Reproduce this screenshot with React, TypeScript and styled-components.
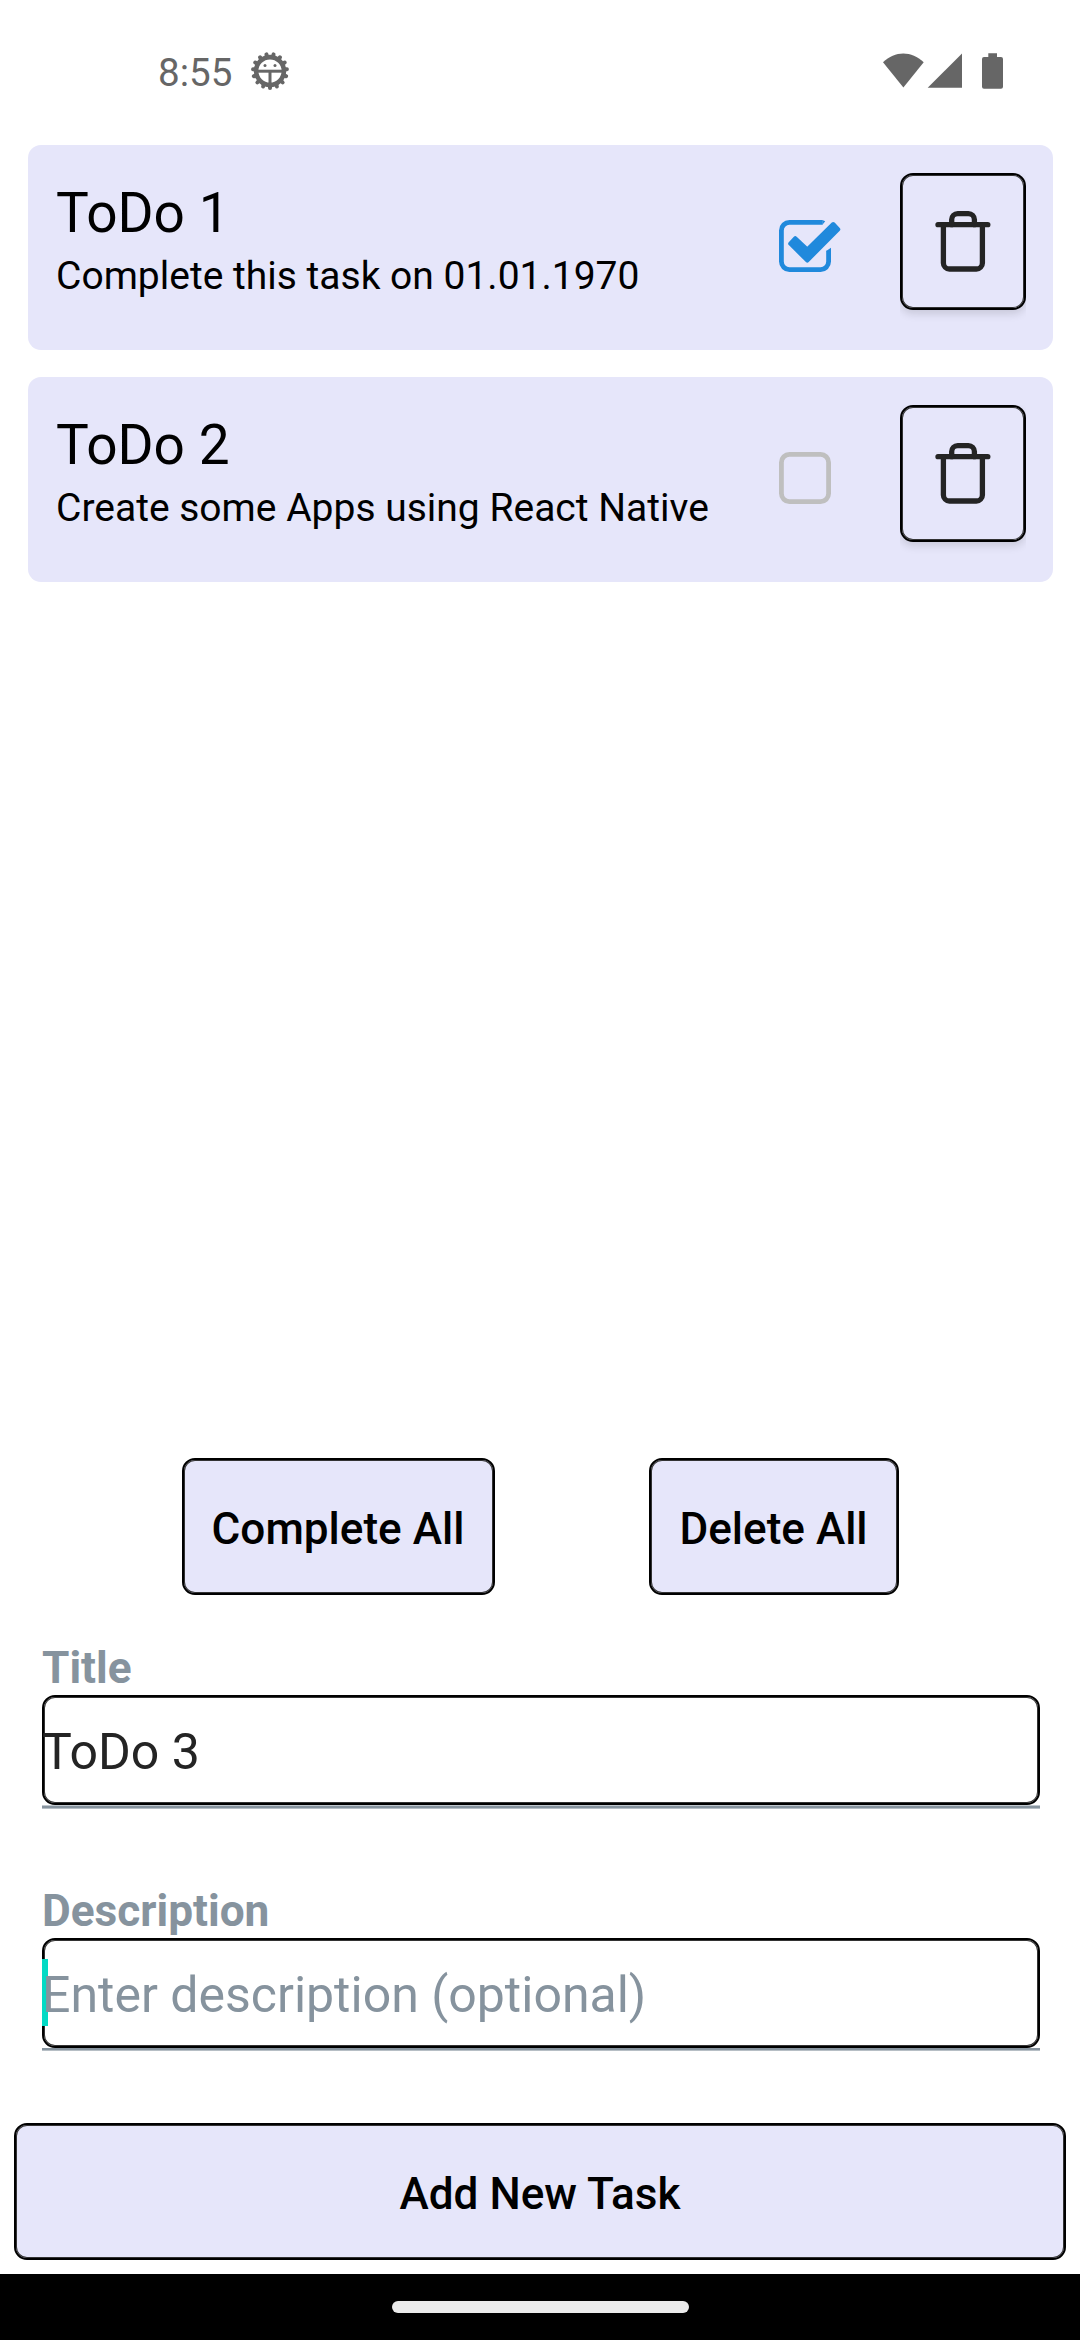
import React, { useState } from "react";
import styled, { createGlobalStyle, css } from "styled-components";

const colors = {
  lavender: "#e6e6fa",
  primary: "#2089dc",
  grey: "#86939e",
  unchecked: "#bfbfbf",
  text: "#242424",
  status: "#666666",
  cursor: "#03dac5",
};

const GlobalStyle = createGlobalStyle`
  * { box-sizing: border-box; }
  body { margin: 0; background: #fff; }
`;

const outlined = css`
  border: 2px solid #000;
  border-radius: 13px;
  box-shadow: inset 0 0 0 1px #333;
`;

const Screen = styled.div`
  display: flex;
  flex-direction: column;
  width: 1080px;
  height: 2340px;
  overflow: hidden;
  background: #fff;
  font-family: Roboto, "Liberation Sans", sans-serif;
  color: #000;
`;

const StatusBar = styled.header`
  display: flex;
  align-items: flex-start;
  height: 145px;
  padding: 50px 76px 0 158px;
  color: ${colors.status};
`;

const Clock = styled.span`
  width: 92px;
  font-size: 38.6px;
  line-height: 46px;
`;

const DebugBadge = styled.span`
  display: flex;
  padding-top: 1px;
`;

const StatusIcons = styled.div`
  display: flex;
  margin-left: auto;
  padding-top: 2px;
`;

const TaskList = styled.main`
  display: flex;
  flex: 1;
  flex-direction: column;
  gap: 27px;
  padding: 0 27px 0 28px;
`;

const Card = styled.article`
  display: flex;
  align-items: flex-start;
  height: 205px;
  padding: 28px 27px 0 28px;
  border-radius: 13px;
  background: ${colors.lavender};
`;

const CardText = styled.div`
  flex: 1;
  padding-top: 8px;
  white-space: nowrap;
`;

const CardTitle = styled.div`
  margin-bottom: 8px;
  font-size: 55px;
  line-height: 64px;
`;

const CardDescription = styled.div`
  font-size: 39px;
  line-height: 46px;
`;

const CheckToggle = styled.button`
  display: flex;
  margin: 45px 58px 0 0;
  padding: 0;
  border: 0;
  background: none;
`;

const TrashButton = styled.button`
  display: flex;
  align-items: center;
  justify-content: center;
  width: 126px;
  height: 137px;
  padding: 0;
  background: ${colors.lavender};
  ${outlined}
  box-shadow: inset 0 0 0 1px #333, 0 4px 9px rgba(0, 0, 0, 0.13);
  clip-path: inset(0 0 -12px 0);
`;

const BulkActions = styled.div`
  display: flex;
  justify-content: center;
  gap: 154px;
  margin-bottom: 47px;
`;

const Button = styled.button<{ $width?: number }>`
  ${({ $width }) => $width && `width: ${$width}px;`}
  height: 137px;
  padding: 43px 0 0;
  background: ${colors.lavender};
  color: #000;
  font: 500 44.1px/52px Roboto, "Liberation Sans", sans-serif;
  white-space: nowrap;
  display: flex;
  justify-content: center;
  ${outlined}
`;

const AddButton = styled(Button)`
  margin: 0 14px 14px;
`;

const Field = styled.section<{ $space: number }>`
  margin: 0 40px ${({ $space }) => $space}px 42px;
`;

const Label = styled.div`
  margin-bottom: 1px;
  color: ${colors.grey};
  font-size: 44.2px;
  font-weight: 700;
  line-height: 52px;
`;

const InputBox = styled.div`
  position: relative;
  height: 110px;
  padding-top: 26px;
  ${outlined}
`;

const InputText = styled.span<{ $placeholder?: boolean }>`
  position: relative;
  display: block;
  margin-left: -2px;
  color: ${({ $placeholder }) => ($placeholder ? colors.grey : colors.text)};
  font-size: 50px;
  line-height: 58px;
`;

const Cursor = styled.i`
  position: absolute;
  top: 19px;
  left: -2px;
  width: 6px;
  height: 67px;
  background: ${colors.cursor};
`;

const Underline = styled.div<{ $tight?: boolean }>`
  height: ${({ $tight }) => ($tight ? 3 : 4)}px;
  border-top: ${({ $tight }) => ($tight ? 0 : 1)}px solid #c0c7cd;
  border-bottom: 1px solid #b6bec5;
  background: ${colors.grey};
`;

const NavigationBar = styled.footer`
  display: flex;
  justify-content: center;
  height: 66px;
  padding-top: 27px;
  background: #000;
`;

const HomePill = styled.div`
  width: 297px;
  height: 12px;
  border-radius: 6px;
  background: #ebebeb;
`;

function DebugIcon() {
  const teeth = Array.from({ length: 15 }, (_, i) => i * 24);
  return (
    <svg width="40" height="40" viewBox="-20 -20 40 40" fill="none" stroke="currentColor">
      {teeth.map((a) => (
        <path key={a} d="M0 14.5V17" strokeWidth="4" strokeLinecap="round" transform={`rotate(${a})`} />
      ))}
      <circle r="13.9" strokeWidth="4.6" />
      <path d="M-13 .2H13" strokeWidth="3" />
      <path d="M0 0V13" strokeWidth="3" />
      <circle cx="-5" cy="-5.6" r="1.5" fill="currentColor" stroke="none" />
      <circle cx="5" cy="-5.6" r="1.5" fill="currentColor" stroke="none" />
    </svg>
  );
}

function SignalIcons() {
  return (
    <svg width="122" height="38" viewBox="882 52 122 38" fill="currentColor">
      <path d="M883 62.3C895 50.4 911.6 50.4 923.7 62.3L903.4 87.5Z" />
      <path d="M962 53.5V87.7H927.7Z" />
      <path d="M988.3 53.3H997V57H1001a2 2 0 0 1 2 2V86.7a2 2 0 0 1-2 2H984a2 2 0 0 1-2-2V59a2 2 0 0 1 2-2H988.3Z" />
    </svg>
  );
}

function CheckIcon({ checked }: { checked: boolean }) {
  return (
    <svg width="64" height="56" viewBox="778 218 64 56" fill="none">
      {checked ? (
        <>
          <path
            d="M822.6 222.4H789.4a8 8 0 0 0-8 8V261.6a8 8 0 0 0 8 8H820.6a8 8 0 0 0 8-8V250.8"
            stroke={colors.primary}
            strokeWidth="4.8"
          />
          <path d="M822.4 220L825.2 221.2L822.4 224.8Z" fill={colors.primary} />
          <path d="M826.2 251L831 247.8V251.2H826.2Z" fill={colors.primary} />
          <path
            d="M790.2 243.7L795.3 238.2L807.3 249.5L833.2 224L838.3 229.3L807.3 260.6Z"
            fill={colors.primary}
            stroke={colors.primary}
            strokeWidth="4"
            strokeLinejoin="round"
          />
        </>
      ) : (
        <rect x="781.4" y="222.4" width="47.2" height="47.2" rx="8" stroke={colors.unchecked} strokeWidth="4.8" />
      )}
    </svg>
  );
}

function TrashIcon() {
  return (
    <svg width="56" height="63" viewBox="935 210 56 63" fill="none" stroke={colors.text} strokeWidth="5.3" strokeLinecap="round">
      <path d="M938 224.7H987.8" />
      <path d="M943.4 225V263a6 6 0 0 0 6 6H976.4a6 6 0 0 0 6-6V225" />
      <path d="M951.7 224.7V219.6a6 6 0 0 1 6-6H968.4a6 6 0 0 1 6 6V224.7" />
    </svg>
  );
}

const initialTasks = [
  { id: 1, title: "ToDo 1", description: "Complete this task on 01.01.1970", done: true },
  { id: 2, title: "ToDo 2", description: "Create some Apps using React Native", done: false },
];

export default function App() {
  const [tasks, setTasks] = useState(initialTasks);
  const toggle = (id: number) =>
    setTasks((all) => all.map((t) => (t.id === id ? { ...t, done: !t.done } : t)));
  const remove = (id: number) => setTasks((all) => all.filter((t) => t.id !== id));

  return (
    <Screen>
      <GlobalStyle />
      <StatusBar>
        <Clock>8:55</Clock>
        <DebugBadge>
          <DebugIcon />
        </DebugBadge>
        <StatusIcons>
          <SignalIcons />
        </StatusIcons>
      </StatusBar>
      <TaskList>
        {tasks.map((task) => (
          <Card key={task.id}>
            <CardText>
              <CardTitle>{task.title}</CardTitle>
              <CardDescription>{task.description}</CardDescription>
            </CardText>
            <CheckToggle onClick={() => toggle(task.id)}>
              <CheckIcon checked={task.done} />
            </CheckToggle>
            <TrashButton onClick={() => remove(task.id)}>
              <TrashIcon />
            </TrashButton>
          </Card>
        ))}
      </TaskList>
      <BulkActions>
        <Button $width={313} onClick={() => setTasks((all) => all.map((t) => ({ ...t, done: true })))}>
          Complete All
        </Button>
        <Button $width={250} onClick={() => setTasks([])}>
          Delete All
        </Button>
      </BulkActions>
      <Field $space={76}>
        <Label>Title</Label>
        <InputBox>
          <InputText>ToDo 3</InputText>
        </InputBox>
        <Underline />
      </Field>
      <Field $space={72}>
        <Label>Description</Label>
        <InputBox>
          <Cursor />
          <InputText $placeholder>Enter description (optional)</InputText>
        </InputBox>
        <Underline $tight />
      </Field>
      <AddButton>Add New Task</AddButton>
      <NavigationBar>
        <HomePill />
      </NavigationBar>
    </Screen>
  );
}
